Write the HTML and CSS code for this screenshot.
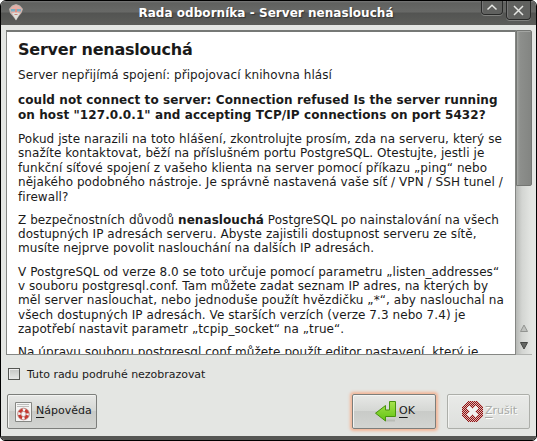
FILE: index.html
```html
<!DOCTYPE html>
<html lang="cs">
<head>
<meta charset="utf-8">
<title>Rada odborníka - Server nenaslouchá</title>
<link rel="stylesheet" href="styles.css">
</head>
<body>
<div class="window">
  <header class="titlebar">
    <svg class="app-icon" width="16" height="17" viewBox="0 0 16 17">
      <path d="M1 5L4 1.5L8 0L12 1.5L15 5L13.5 9L11 12L8 16.5L5 12.5L2 9Z" fill="#bdb5b0"/>
      <path d="M3.5 3L8 1L12.5 3L14 6L12 10H4L2.5 6Z" fill="#e5aea6"/>
      <path d="M3 5h4v2.5H3zM9 5h4v2.5H9z" fill="#78afc2"/>
      <path d="M7 5h2v4H7z" fill="#e08d83"/>
      <path d="M4 9.5L7 8.5H9L12 9.5L10 12.5L8 16L6 12.5Z" fill="#dedfda"/>
      <path d="M6.5 10h3v1h-3z" fill="#c58378"/>
    </svg>
    <h1 class="title">Rada odborníka - Server nenaslouchá</h1>
    <div class="controls">
      <button class="control roll" aria-label="Sbalit"><svg width="12" height="7" viewBox="0 0 12 7"><path d="M1.5 5.5L6 1.2L10.5 5.5"/></svg></button>
      <button class="control close" aria-label="Zavřít"><svg width="11" height="11" viewBox="0 0 11 11"><path d="M1 1L10 10M10 1L1 10"/></svg></button>
    </div>
  </header>
  <main class="content">
    <section class="viewer">
      <article class="hint">
        <h2>Server nenaslouchá</h2>
        <p>Server nepřijímá spojení: připojovací knihovna hlásí</p>
        <p class="error">could not connect to server: Connection refused Is the server running<br>on host "127.0.0.1" and accepting TCP/IP connections on port 5432?</p>
        <p>Pokud jste narazili na toto hlášení, zkontrolujte prosím, zda na serveru, který se<br>snažíte kontaktovat, běží na příslušném portu PostgreSQL. Otestujte, jestli je<br>funkční síťové spojení z vašeho klienta na server pomocí příkazu „ping“ nebo<br>nějakého podobného nástroje. Je správně nastavená vaše síť / VPN / SSH tunel /<br>firewall?</p>
        <p>Z bezpečnostních důvodů <b>nenaslouchá</b> PostgreSQL po nainstalování na všech<br>dostupných IP adresách serveru. Abyste zajistili dostupnost serveru ze sítě,<br>musíte nejprve povolit naslouchání na dalších IP adresách.</p>
        <p>V PostgreSQL od verze 8.0 se toto určuje pomocí parametru „listen_addresses“<br>v souboru postgresql.conf. Tam můžete zadat seznam IP adres, na kterých by<br>měl server naslouchat, nebo jednoduše použít hvězdičku „*“, aby naslouchal na<br>všech dostupných IP adresách. Ve starších verzích (verze 7.3 nebo 7.4) je<br>zapotřebí nastavit parametr „tcpip_socket“ na „true“.</p>
        <p>Na úpravu souboru postgresql.conf můžete použít editor nastavení, který je</p>
      </article>
      <div class="scrollbar">
        <div class="thumb"></div>
        <svg class="arrows" width="15" height="30" viewBox="0 0 15 30"><path d="M4.5 10.5L8 4L11.5 10.5Z" fill="#bfc1be" stroke="#929491"/><path d="M4.5 21.5H11.5L8 28Z" fill="#656764" stroke="#444643"/></svg>
      </div>
    </section>
    <label class="check"><span class="box"></span><span>Tuto radu podruhé nezobrazovat</span></label>
    <footer class="actions">
      <button class="btn help">
        <svg width="19" height="22" viewBox="0 0 19 22">
          <path d="M1.5 1.5h16v19h-16z" fill="#f5f5f4" stroke="#858783"/>
          <path d="M3 3.5h12M3 5.5h12" stroke="#bdbebc"/>
          <circle cx="9.5" cy="13" r="4.2" fill="none" stroke="#f5f5f5" stroke-width="3.2"/>
          <circle cx="9.5" cy="13" r="4.2" fill="none" stroke="#c8382f" stroke-width="3" stroke-dasharray="4 2.597" stroke-dashoffset="-1.3"/>
          <circle cx="9.5" cy="13" r="5.8" fill="none" stroke="#ac5d58" stroke-width=".7"/>
          <circle cx="9.5" cy="13" r="2.6" fill="#f7f7f7" stroke="#ac5d58" stroke-width=".7"/>
        </svg>
        <span><u>N</u>ápověda</span>
      </button>
      <button class="btn ok">
        <svg width="23" height="23" viewBox="0 0 23 23">
          <defs><linearGradient id="green" x2="0" y2="1"><stop stop-color="#a6e24e"/><stop offset="1" stop-color="#61c411"/></linearGradient></defs>
          <path d="M11 20.5h10" stroke="#b9bcb6" stroke-width="2"/>
          <path d="M15.5 1.5H21.5V16.5H11.5V21L1.5 13.2L11.5 5.5V10H15.5Z" fill="url(#green)" stroke="#48920d" stroke-linejoin="round"/>
        </svg>
        <span><u>O</u>K</span>
      </button>
      <button class="btn cancel" disabled>
        <svg width="21" height="21" viewBox="0 0 21 21" shape-rendering="crispEdges">
          <defs><pattern id="dither" width="2" height="2" patternUnits="userSpaceOnUse"><path d="M0 0h2v2H0z" fill="#deb9b6"/><path d="M0 0h1v1H0zM1 1h1v1H1z" fill="#8e1010"/></pattern></defs>
          <path d="M6 0H15L21 6V15L15 21H6L0 15V6Z" fill="url(#dither)"/>
          <path d="M6 6L15 15M15 6L6 15" stroke="#efefed" stroke-width="3.6"/>
        </svg>
        <span><u>Z</u>rušit</span>
      </button>
    </footer>
  </main>
</div>
</body>
</html>
```
FILE: styles.css
```css
* { box-sizing: border-box; }
body { margin: 0; background: #fff; font: 11px "DejaVu Sans", sans-serif; color: #1a1a1a; overflow: hidden; }
button { font: inherit; color: inherit; padding: 0; margin: 0; }
svg { display: block; flex: none; }
.window {
  width: 537px; height: 441px; display: flex; flex-direction: column;
  border: 1px solid #000; border-radius: 6px 6px 5px 5px;
  background: #e4e6e3; overflow: hidden;
}
.titlebar {
  height: 24px; flex: none; display: flex; align-items: flex-start;
  padding-left: 7px; background: linear-gradient(#777 0, #60615f 2px, #686967 11px, #535452 12px, #5c5d5a 24px);
}
.app-icon { margin-top: 3px; }
.title {
  margin: 0; flex: 1; text-align: center; padding-left: 27px; font-size: 12px; line-height: 24px; letter-spacing: .04px;
  color: #fff; text-shadow: 1px 1px 1px #333; white-space: nowrap;
}
.controls { display: flex; gap: 3px; padding-right: 5px; }
.control {
  display: flex; justify-content: center; border: 1px solid #292a29; border-top: 0;
  border-radius: 0 0 4px 4px; background: #60615f; box-shadow: 0 1px #81827f, inset 1px 0 #777;
}
.control path { fill: none; stroke: #e5e6e3; stroke-width: 1.5; }
.roll { width: 22px; height: 14px; padding-top: 3px; }
.close { width: 25px; height: 19px; padding-top: 4px; }
.content { flex: 1; padding: 5px 4px 0 5px; border-bottom: 4px solid #555653; }
.viewer { display: flex; height: 325px; }
.hint {
  width: 510px; height: 325px; border: 1px solid #858784; border-width: 2px 1px 1px; border-top-color: #767876;
  background: #fff; overflow: hidden; padding: 8px 0 0 11px; font-size: 12px; line-height: 14.4px; letter-spacing: .065px; white-space: nowrap;
}
.hint h2 { margin: 0; font-size: 16px; line-height: 20px; letter-spacing: -.22px; }
.hint p { margin: 0 0 8.7px; }
.hint h2 + p { margin: 8px 0 11px; }
.hint .error { font-weight: bold; letter-spacing: .085px; margin-bottom: 9.7px; }
.scrollbar {
  width: 16px; display: flex; flex-direction: column; justify-content: space-between;
  background: linear-gradient(90deg, #b6b8b5, #d3d5d2 6px, #e3e5e2 15px); border-bottom: 1px solid #b1b3b0;
}
.thumb { height: 156px; border: 1px solid #747673; border-radius: 0 2px 2px 0; background: linear-gradient(90deg, #a0a29f, #8d8f8c 3px, #838582); box-shadow: inset 1px 1px #a3a5a2; }
.arrows { margin-bottom: 3px; }
.check { display: flex; align-items: center; gap: 7px; margin: 12px 0 0 2px; height: 14px; letter-spacing: -.03px; }
.box { width: 12px; height: 12px; border: 1px solid #555753; background: linear-gradient(#c4c6c3, #e6e7e5); box-shadow: inset 1px 1px #eee; }
.actions { display: flex; margin-top: 13px; padding-left: 1px; align-items: flex-start; }
.btn {
  display: flex; align-items: center; height: 35px; border: 1px solid #7c7e7b; border-radius: 2px;
  background: linear-gradient(#e7e8e6 0, #d5d7d4 48%, #c9cbc8 50%, #d2d4d1 100%); box-shadow: inset 1px 1px #f3f4f2;
}
.btn > span { position: relative; top: -1px; }
.btn u { text-underline-offset: 3px; text-decoration-thickness: 1px; }
.help { width: 90px; padding-left: 6px; gap: 3px; }
.ok { width: 84px; margin-left: 255px; padding-left: 21px; gap: 2px; box-shadow: inset 1px 1px #f3f4f2, 0 0 3px 2px #f3b597; }
.cancel { width: 83px; margin-left: 11px; padding-left: 14px; gap: 2px; border-color: #acaea9; color: #a8aaa6; background: linear-gradient(#e9eae8, #dddfdc); text-shadow: 1px 1px #fff; }
```
